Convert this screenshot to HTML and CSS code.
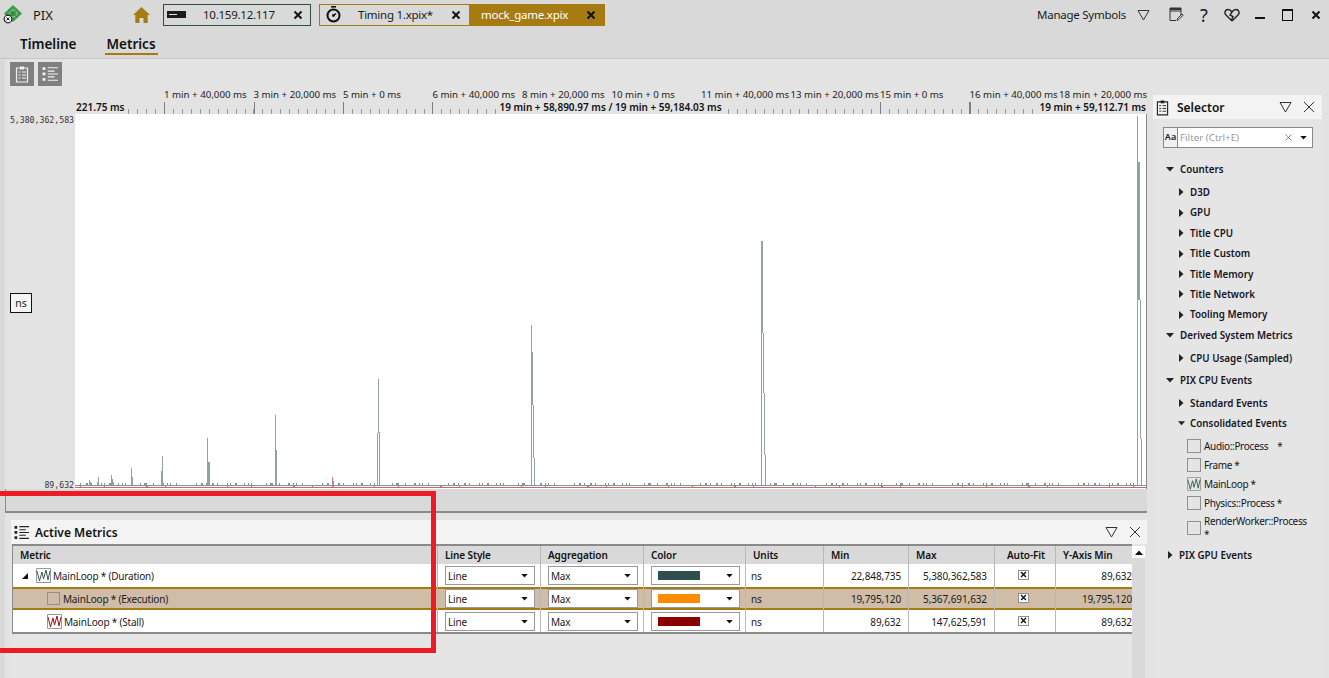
FILE: index.html
```html
<!DOCTYPE html>
<html lang="en">
<head>
<meta charset="utf-8">
<title>PIX</title>
<link rel="stylesheet" href="styles.css">
</head>
<body>
<svg class="defs" width="0" height="0" aria-hidden="true">
  <symbol id="x-bold" viewBox="0 0 10 10"><path d="M1.5 1.5l7 7M8.5 1.5l-7 7" fill="none" stroke="currentColor" stroke-width="2"/></symbol>
  <symbol id="x-thin" viewBox="0 0 12 12"><path d="M1 1l10 10M11 1L1 11" fill="none" stroke="currentColor" stroke-width="1"/></symbol>
  <symbol id="tri-down" viewBox="0 0 13 12"><path d="M1 1.5h11L6.5 11z" fill="none" stroke="currentColor" stroke-width="1"/></symbol>
  <symbol id="caret" viewBox="0 0 8 5"><path d="M0 0h8L4 4.5z" fill="currentColor"/></symbol>
  <symbol id="caret-r" viewBox="0 0 5 8"><path d="M0 0v8l4.5-4z" fill="currentColor"/></symbol>
  <symbol id="wave" viewBox="0 0 15 15"><path d="M.5.5h14v14H.5z" fill="none" stroke="#9a9a9a"/><path d="M1 3l2.5 10L6 4l1.5 7L10 2l2 10 2-9" fill="none" stroke="currentColor" stroke-width="1"/></symbol>
  <symbol id="clip" viewBox="0 0 14 18"><path d="M1.5 3h11v14h-11z" fill="none" stroke="currentColor" stroke-width="1.2"/><path d="M5 1.5h4V4.500H5z" fill="currentColor"/><path d="M3.500 7h2M7 7h4M3.500 10h2M7 10h4M3.500 13h2M7 13h4" stroke="currentColor" stroke-width="1"/></symbol>
  <symbol id="list" viewBox="0 0 14 14"><path d="M.5 1h2.500v2.500H.5zM.5 5.700h2.500v2.500H.5zM.5 10.500h2.500V13H.5z" fill="currentColor"/><path d="M5 1.500h9M5 4.500h6M5 7h9M5 9.500h6M5 12.500h9" stroke="currentColor" stroke-width="1" fill="none"/></symbol>
</svg>

<div class="app">
  <header class="titlebar">
    <svg class="logo" width="20" height="20" viewBox="0 0 20 20">
      <path d="M10 1l9 8.500-9 8.500-9-8.500z" fill="#3f9c4e"/>
      <circle cx="10" cy="9.500" r="3.600" fill="none" stroke="#8fd08f"/>
      <path d="M6 5.500l8 8M14 5.500l-8 8" stroke="#2f7d3c"/>
      <circle cx="5" cy="15" r="3.800" fill="#fff" stroke="#222" stroke-width="1.200"/>
      <path d="M3.500 13.500l3 3M6.500 13.500l-3 3" stroke="#222"/>
    </svg>
    <span class="app-name">PIX</span>
    <svg class="home" width="17" height="16" viewBox="0 0 17 16"><path d="M8.500 0L17 8h-2.300v8h-4.200v-5h-4v5H2.300V8H0z" fill="#a67c12"/></svg>
    <div class="conn-tab">
      <svg class="console" width="19" height="7" viewBox="0 0 19 7"><path d="M0 0h19v7H0z" fill="#1c1c1c"/><path d="M2 3h8v1H2z" fill="#e0e0e0"/></svg>
      <span class="conn-label">10.159.12.117</span>
      <svg class="x-bold"><use href="#x-bold"/></svg>
    </div>
    <div class="file-tabs">
      <div class="file-tab">
        <svg class="timer" width="15" height="17" viewBox="0 0 15 17"><path d="M5 .8h5" stroke="#111" stroke-width="1.600"/><circle cx="7.500" cy="9.500" r="6" fill="none" stroke="#111" stroke-width="2"/><path d="M7.500 9.500L10 7.500" stroke="#111" stroke-width="1.500"/><circle cx="7.500" cy="9.500" r="1.400" fill="#111"/></svg>
        <span class="file-label timing">Timing 1.xpix*</span>
        <svg class="x-bold"><use href="#x-bold"/></svg>
      </div>
      <div class="file-tab active">
        <span class="file-label">mock_game.xpix</span>
        <svg class="x-bold"><use href="#x-bold"/></svg>
      </div>
    </div>
    <div class="title-actions">
      <span class="manage">Manage Symbols</span>
      <svg class="ta-tri"><use href="#tri-down"/></svg>
      <svg class="ta-note" width="15" height="15" viewBox="0 0 15 15"><path d="M1 1h11v3H1zM1 4v9.500h6M12 4v4" fill="none" stroke="#333"/><path d="M1 1h11v2H1z" fill="#333"/><path d="M8 13.500l.5-2L13 7l1.200 1.200-4.500 4.500z" fill="none" stroke="#333"/></svg>
      <span class="ta-help">?</span>
      <svg class="ta-heart" width="16" height="14" viewBox="0 0 16 14"><path d="M8 13L2 7C0 5 1 1.500 4 1.500c2 0 3 1 4 2.500l-2 3 3 1.500L7.500 12M8 4c1-1.500 2-2.500 4-2.500 3 0 4 3.500 2 5.500l-6 6" fill="none" stroke="#222" stroke-width="1.400"/></svg>
      <span class="ta-min"></span>
      <span class="ta-max"></span>
      <svg class="x-bold ta-close"><use href="#x-bold"/></svg>
    </div>
  </header>

  <nav class="navbar">
    <span class="nav-item">Timeline</span>
    <span class="nav-item current">Metrics</span>
  </nav>

  <div class="workspace">
    <section class="left">
      <div class="toolbar">
        <span class="tool"><svg width="14" height="18"><use href="#clip"/></svg></span>
        <span class="tool"><svg width="16" height="16"><use href="#list"/></svg></span>
      </div>

      <div class="ruler">
        <div class="ruler-labels">
          <span>1 min + 40,000 ms</span>
          <span>3 min + 20,000 ms</span>
          <span>5 min + 0 ms</span>
          <span>6 min + 40,000 ms</span>
          <span>8 min + 20,000 ms</span>
          <span>10 min + 0 ms</span>
          <span>11 min + 40,000 ms</span>
          <span>13 min + 20,000 ms</span>
          <span>15 min + 0 ms</span>
          <span>16 min + 40,000 ms</span>
          <span>18 min + 20,000 ms</span>
        </div>
        <div class="ruler-marks">
          <b class="mark-left">221.75 ms</b>
          <b class="mark-mid">19 min + 58,890.97 ms / 19 min + 59,184.03 ms</b>
          <b class="mark-right">19 min + 59,112.71 ms</b>
        </div>
      </div>

      <div class="chart-row">
        <div class="y-axis">
          <span class="y-val">5,380,362,583</span>
          <span class="unit-box">ns</span>
          <span class="y-val">89,632</span>
        </div>
        <svg class="plot" width="1072" height="376" viewBox="75 114 1072 376">
          <rect x="75" y="114" width="1072" height="376" fill="#fff"/>
          <line x1="75" y1="485.500" x2="1146" y2="485.500" stroke="#7f9694" stroke-width="1"/>
          <line x1="75" y1="487.500" x2="1146" y2="487.500" stroke="#c46a6a" stroke-width="1"/>
          <g fill="none" stroke="#8fa3a1" stroke-width="1">
            <path d="M80 484H1136" stroke="#7f9694" stroke-width="2" stroke-dasharray="1 5 2 3 1 9 1 2 1 4 2 7 1 3 1 2 1 14 1 3 3 6 1 8 2 3 1 2 1 5 1 19 1 4 2 3"/>
            <path d="M89.500 485V480M90.500 485V482"/>
            <path d="M98.500 485V477M97.500 485V482"/>
            <path d="M111.500 485V475M112.500 485V479M113.500 485V482"/>
            <path d="M131.500 485V468M132.500 485V477"/>
            <path d="M161.500 485V471M162.500 485V456"/>
            <path d="M207.500 485V438M208.500 485V462M209.500 485V462"/>
            <path d="M275.500 485V415M276.500 485V450"/>
            <path d="M377.500 485V433M378.500 433V379M379.500 485V432"/>
            <path d="M531.500 485V325M532.500 405V352M533.500 458V405M534.500 485V458"/>
            <path d="M761.500 485V241M762.500 333V241M763.500 393V333M764.500 455V393M765.500 485V455"/>
            <path d="M1137.500 485V116M1138.500 300V162M1139.500 300V162M1140.500 439V300M1141.500 485V439"/>
            <path d="M1146.500 114V490" stroke="#888"/>
          </g>
          <path d="M332.500 487V477M333.500 487V481" stroke="#c97f7f" fill="none"/>
          <path d="M80 486.500H1140" stroke="#c46a6a" stroke-dasharray="1 23 1 41 2 17 1 61"/>
          <rect x="75" y="489" width="1072" height="1" fill="#888"/>
        </svg>
      </div>

      <div class="hscroll"></div>

      <section class="metrics">
        <div class="panel-head">
          <svg class="panel-icon" width="15" height="15"><use href="#list"/></svg>
          <span class="panel-title">Active Metrics</span>
          <svg class="panel-tri"><use href="#tri-down"/></svg>
          <svg class="panel-x"><use href="#x-thin"/></svg>
        </div>
        <div class="table-wrap">
          <div class="table">
            <div class="row head">
              <span class="cell">Metric</span><span class="cell">Line Style</span><span class="cell">Aggregation</span><span class="cell">Color</span><span class="cell">Units</span><span class="cell">Min</span><span class="cell">Max</span><span class="cell center">Auto-Fit</span><span class="cell">Y-Axis Min</span>
            </div>
            <div class="row">
              <span class="cell name lvl0"><svg class="tree-open" width="6" height="6" viewBox="0 0 6 6"><path d="M6 0v6H0z" fill="#111"/></svg><svg class="wave dark" width="15" height="15"><use href="#wave"/></svg>MainLoop * (Duration)</span>
              <span class="cell"><span class="drop">Line<svg class="drop-caret"><use href="#caret"/></svg></span></span>
              <span class="cell"><span class="drop">Max<svg class="drop-caret"><use href="#caret"/></svg></span></span>
              <span class="cell"><span class="drop swatch-drop"><i class="swatch teal"></i><svg class="drop-caret"><use href="#caret"/></svg></span></span>
              <span class="cell">ns</span><span class="cell num">22,848,735</span><span class="cell num">5,380,362,583</span>
              <span class="cell center"><span class="check"><svg width="7" height="7"><use href="#x-bold"/></svg></span></span>
              <span class="cell num">89,632</span>
            </div>
            <div class="row selected">
              <span class="cell name lvl1"><i class="box"></i>MainLoop * (Execution)</span>
              <span class="cell"><span class="drop">Line<svg class="drop-caret"><use href="#caret"/></svg></span></span>
              <span class="cell"><span class="drop">Max<svg class="drop-caret"><use href="#caret"/></svg></span></span>
              <span class="cell"><span class="drop swatch-drop"><i class="swatch orange"></i><svg class="drop-caret"><use href="#caret"/></svg></span></span>
              <span class="cell">ns</span><span class="cell num">19,795,120</span><span class="cell num">5,367,691,632</span>
              <span class="cell center"><span class="check"><svg width="7" height="7"><use href="#x-bold"/></svg></span></span>
              <span class="cell num">19,795,120</span>
            </div>
            <div class="row">
              <span class="cell name lvl1"><svg class="wave red" width="15" height="15"><use href="#wave"/></svg>MainLoop * (Stall)</span>
              <span class="cell"><span class="drop">Line<svg class="drop-caret"><use href="#caret"/></svg></span></span>
              <span class="cell"><span class="drop">Max<svg class="drop-caret"><use href="#caret"/></svg></span></span>
              <span class="cell"><span class="drop swatch-drop"><i class="swatch maroon"></i><svg class="drop-caret"><use href="#caret"/></svg></span></span>
              <span class="cell">ns</span><span class="cell num">89,632</span><span class="cell num">147,625,591</span>
              <span class="cell center"><span class="check"><svg width="7" height="7"><use href="#x-bold"/></svg></span></span>
              <span class="cell num">89,632</span>
            </div>
          </div>
          <div class="vscroll"><span class="vscroll-up"><svg width="8" height="5" viewBox="0 0 8 5"><path d="M0 5h8L4 .5z" fill="#111"/></svg></span></div>
        </div>
      </section>
    </section>

    <aside class="selector">
      <div class="panel-head sel-head">
        <svg class="sel-icon" width="13" height="17"><use href="#clip"/></svg>
        <span class="sel-title">Selector</span>
        <svg class="panel-tri"><use href="#tri-down"/></svg>
        <svg class="panel-x"><use href="#x-thin"/></svg>
      </div>
      <div class="filter">
        <span class="filter-aa">Aa</span>
        <span class="filter-text">Filter (Ctrl+E)</span>
        <svg class="filter-x"><use href="#x-thin"/></svg>
        <svg class="filter-caret"><use href="#caret"/></svg>
      </div>
      <ul class="tree">
        <li class="g0 open"><svg class="t-down"><use href="#caret"/></svg>Counters</li>
        <li class="g1"><svg class="t-right"><use href="#caret-r"/></svg>D3D</li>
        <li class="g1"><svg class="t-right"><use href="#caret-r"/></svg>GPU</li>
        <li class="g1"><svg class="t-right"><use href="#caret-r"/></svg>Title CPU</li>
        <li class="g1"><svg class="t-right"><use href="#caret-r"/></svg>Title Custom</li>
        <li class="g1"><svg class="t-right"><use href="#caret-r"/></svg>Title Memory</li>
        <li class="g1"><svg class="t-right"><use href="#caret-r"/></svg>Title Network</li>
        <li class="g1"><svg class="t-right"><use href="#caret-r"/></svg>Tooling Memory</li>
        <li class="g0 open"><svg class="t-down"><use href="#caret"/></svg>Derived System Metrics</li>
        <li class="g1 tail"><svg class="t-right"><use href="#caret-r"/></svg>CPU Usage (Sampled)</li>
        <li class="g0 open"><svg class="t-down"><use href="#caret"/></svg>PIX CPU Events</li>
        <li class="g1"><svg class="t-right"><use href="#caret-r"/></svg>Standard Events</li>
        <li class="g1 open"><svg class="t-down"><use href="#caret"/></svg>Consolidated Events</li>
        <li class="leaf"><i class="box small"></i><span class="leaf-text">Audio::Process &nbsp;&nbsp;&nbsp;*</span></li>
        <li class="leaf"><i class="box small"></i><span class="leaf-text">Frame *</span></li>
        <li class="leaf"><svg class="wave dark" width="14" height="14"><use href="#wave"/></svg><span class="leaf-text">MainLoop *</span></li>
        <li class="leaf"><i class="box small"></i><span class="leaf-text">Physics::Process *</span></li>
        <li class="leaf wrap"><i class="box small"></i><span class="leaf-text">RenderWorker::Process *</span></li>
        <li class="g0 closed"><svg class="t-right"><use href="#caret-r"/></svg>PIX GPU Events</li>
      </ul>
    </aside>
  </div>

  <div class="callout"></div>
</div>
</body>
</html>
```
FILE: styles.css
```css
* { box-sizing: border-box; }
html, body { margin: 0; padding: 0; }
body { font-family: "Noto Sans", "Open Sans", sans-serif; color: #1a1a1a; overflow: hidden; }
.defs { position: absolute; }
svg { display: block; flex: none; }
i { display: block; flex: none; }

.app { position: relative; width: 1329px; height: 678px; overflow: hidden; background: #d9d9d9; display: flex; flex-direction: column; }

/* title bar */
.titlebar { height: 29px; flex: none; display: flex; align-items: center; padding-left: 3px; }
.logo { margin-top: -1px; }
.app-name { margin-left: 10px; font-size: 13px; width: 100px; }
.home { margin-top: 1px; }
.conn-tab { margin-left: 13px; width: 148px; height: 22px; border: 1px solid #2f4f3f; display: flex; align-items: center; padding-left: 3px; background: #d9d9d9; }
.conn-label { font-size: 11.5px; letter-spacing: -0.25px; margin-left: 17px; width: 90px; }
.x-bold { width: 10px; height: 10px; color: #111; }
.conn-tab .x-bold { margin-left: 0; }
.file-tabs { margin-left: 8px; display: flex; height: 22px; width: 286px; border: 1px solid #a67c12; }
.file-tab { display: flex; align-items: center; width: 149px; padding-left: 6px; }
.file-tab .x-bold { margin-left: 9px; }
.file-label { font-size: 11.5px; letter-spacing: -0.25px; width: 84px; white-space: nowrap; }
.file-label.timing { margin-left: 17px; }
.file-tab.active { flex: 1; width: auto; background: #a67c12; color: #fff; padding-left: 12px; }
.file-tab.active .file-label { width: 94px; }
.file-tab.active .x-bold { margin-left: 11px; color: #111; }
.title-actions { margin-left: auto; display: flex; align-items: center; padding-right: 8px; }
.manage { font-size: 11.5px; letter-spacing: -0.25px; white-space: nowrap; }
.ta-tri { width: 13px; height: 12px; margin-left: 11px; color: #333; }
.ta-note { margin-left: 19px; }
.ta-help { font-size: 18px; margin-left: 14px; width: 12px; text-align: center; }
.ta-heart { margin-left: 14px; }
.ta-min { width: 10px; height: 2px; background: #111; margin-left: 15px; margin-top: 6px; }
.ta-max { width: 11px; height: 12px; border: 1px solid #111; border-top-width: 2px; margin-left: 17px; }
.ta-close { margin-left: 18px; }

/* nav */
.navbar { height: 30px; flex: none; display: flex; gap: 30px; padding: 5px 0 0 20px; border-bottom: 1px solid #c6c6c6; }
.nav-item { font-size: 13.5px; font-weight: 600; color: #111; height: 20px; line-height: 20px; }
.nav-item.current { position: relative; }
.nav-item.current::after { content: ""; position: absolute; left: -2px; right: -2px; top: 19px; height: 2px; background: #a67c12; }

/* workspace */
.workspace { flex: 1; min-height: 0; display: flex; background: #e3e3e3; }
.left { width: 1147px; flex: none; border-left: 5px solid #d9d9d9; display: flex; flex-direction: column; }
.toolbar { height: 29px; flex: none; display: flex; gap: 4px; padding: 3px 0 0 5px; }
.tool { width: 24px; height: 24px; background: #808080; color: #f2f2f2; display: flex; align-items: center; justify-content: center; }

/* ruler */
.ruler { height: 26px; flex: none; margin-left: 70px; position: relative; font-size: 9.7px; line-height: 13px;
  background:
    repeating-linear-gradient(to right, #7f7f7f 0 1px, transparent 1px 89.5px) -0.5px 100% / 100% 12px no-repeat,
    repeating-linear-gradient(to right, #9a9a9a 0 1px, transparent 1px 8.95px) -0.5px 100% / 100% 5px no-repeat;
}
.ruler-labels { display: flex; padding: 0 0 0 89px; white-space: nowrap; height: 13px; color: #222; }
.ruler-labels span { flex: none; width: 89.5px; }
.ruler-marks { display: grid; grid-template-columns: 1fr auto 1fr; height: 13px; font-size: 10px; margin-right: 1px; }
.ruler-marks b { font-weight: 600; background: #e3e3e3; white-space: nowrap; color: #111; }
.mark-left { justify-self: start; padding: 0 1px; }
.mark-right { justify-self: end; padding-left: 2px; }
.mark-mid { padding: 0 2px; }

/* chart */
.chart-row { height: 376px; flex: none; display: flex; }
.y-axis { width: 70px; flex: none; display: flex; flex-direction: column; justify-content: space-between; align-items: flex-end; padding-right: 1px; position: relative; }
.y-val { font-family: "DejaVu Sans Mono", monospace; font-size: 8.2px; line-height: 12px; color: #333; }
.unit-box { position: absolute; left: 5px; top: 179px; width: 22px; height: 20px; border: 1px solid #111; background: #f5f5f5; font-size: 10.5px; display: flex; align-items: center; justify-content: center; }
.y-val:last-child { margin-top: auto; transform: translateY(1px); }
.hscroll { height: 24px; flex: none; background: #d9d9d9; border-left: 1px solid #8a8a8a; border-bottom: 2px solid #8a8a8a; margin-top: -1px; }

/* metrics panel */
.metrics { margin: 7px 0 0 6px; flex: 1; min-height: 0; background: #e5e5e5; display: flex; flex-direction: column; }
.panel-head { height: 24px; flex: none; background: #f3f3f3; display: flex; align-items: center; padding-left: 3px; position: relative; }
.panel-icon { color: #222; }
.panel-title { font-size: 12px; font-weight: 600; margin-left: 6px; color: #111; }
.panel-tri { width: 13px; height: 12px; color: #333; margin-left: auto; }
.panel-x { width: 12px; height: 12px; color: #333; margin: 0 6px 0 11px; }
.table-wrap { flex: 1; min-height: 0; display: flex; overflow: hidden; padding-left: 1px; }
.table { width: 1120px; height: 90px; flex: none; border: solid #8a8a8a; border-width: 2px 0 2px 1px; overflow: hidden; }
.row { display: grid; grid-template-columns: 425px 103px 103px 102px 78px 85px 86px 61px 76px; height: 23px; background: #fff; font-size: 10px; letter-spacing: -0.2px; }
.row.head { height: 18px; background: #d9d9d9; font-weight: 600; color: #111; letter-spacing: -0.1px; }
.row.head .cell { padding-left: 7px; }
.row.selected { background: #cfbda8; box-shadow: inset 0 2px 0 #a67c12, inset 0 -2px 0 #a67c12; }
.cell { display: flex; align-items: center; padding: 0 5px; border-right: 1px solid #b8b8b8; white-space: nowrap; min-width: 0; overflow: hidden; }
.cell:last-child { border-right: 0; }
.cell.num { justify-content: flex-end; padding-right: 7px; letter-spacing: -0.1px; }
.cell.center { justify-content: center; }
.cell:last-child.num { padding-right: 0; }
.name.lvl0 { padding-left: 9px; }
.name.lvl1 { padding-left: 34px; }
.tree-open { margin-right: 8px; }
.wave { margin-right: 2px; }
.wave.dark { color: #3b5b5b; }
.wave.red { color: #8f1212; }
.box { width: 13px; height: 13px; border: 1px solid #8f8f8f; margin-right: 3px; }
.drop { position: relative; width: 90px; height: 19px; margin-left: 2px; background: #fff; border: 1px solid #999; display: flex; align-items: center; padding-left: 2px; }
.drop-caret { width: 7px; height: 4px; margin-left: auto; margin-right: 6px; color: #111; }
.swatch { width: 42px; height: 9px; margin-left: 4px; }
.teal { background: #2f4f4f; }
.orange { background: #ff8c00; }
.maroon { background: #8b0000; }
.check { width: 11px; height: 10px; margin: 0 3px 2px 0; border: 1px solid #8f8f8f; background: #fff; display: flex; align-items: center; justify-content: center; color: #111; }
.vscroll { width: 13px; flex: none; margin-top: 2px; background: #d9d9d9; }
.vscroll-up { height: 12px; background: #fff; display: flex; align-items: center; justify-content: center; }

/* selector */
.selector { margin: 36px 7px 0 6px; flex: 1; min-width: 0; background: #e5e5e5; display: flex; flex-direction: column; }
.sel-head { padding-left: 3px; }
.sel-icon { color: #222; }
.sel-title { font-size: 12px; font-weight: 600; margin-left: 8px; color: #111; }
.selector .panel-x { margin-right: 7px; }
.filter { height: 21px; margin: 8px 9px 0 10px; flex: none; background: #fff; border: 1px solid #8a8a8a; display: flex; align-items: center; font-size: 9.8px; }
.filter-aa { width: 14px; height: 100%; border-right: 1px solid #8a8a8a; font-weight: 600; font-size: 9px; text-align: center; line-height: 18px; background: #f0f0f0; }
.filter-text { margin-left: 2px; color: #9a9a9a; }
.filter-x { width: 7px; height: 7px; margin-left: auto; color: #333; }
.filter-caret { width: 7px; height: 4px; margin: 0 5px 0 8px; color: #111; }
.tree { list-style: none; margin: 11.4px 0 0; padding: 0; font-size: 9.8px; font-weight: 600; color: #15151f; }
.tree li { display: flex; align-items: center; height: 20.4px; white-space: nowrap; }
.g0 { padding-left: 13px; }
.g0.open { margin-bottom: 2.500px; }
.g0.closed { margin-top: 4px; }
.g1 { padding-left: 26px; }
.g1.tail { margin-bottom: 2px; }
.g1.open { margin-bottom: 3px; }
.t-down { width: 8px; height: 5px; margin-right: 6px; color: #222; }
.t-right { width: 5px; height: 8px; margin-right: 6px; color: #222; }
.g0.closed .t-right { margin-right: 6px; margin-left: 2px; }
.g1.open .t-down { margin-left: -1px; margin-right: 5px; width: 7px; }
.tree li.leaf { padding-left: 34px; height: 18.800px; font-weight: 400; font-size: 10px; letter-spacing: -0.33px; }
.tree li.leaf .box.small, .tree li.leaf .wave { width: 14px; height: 14px; margin-right: 3px; }
.tree li.leaf.wrap { height: 26px; margin-top: 3px; white-space: normal; }
.tree li.leaf.wrap .leaf-text { width: 106px; line-height: 13px; }

/* annotation */
.callout { position: absolute; left: -5px; top: 491px; width: 441px; height: 162px; border: 5px solid #ed1c24; pointer-events: none; }
```
